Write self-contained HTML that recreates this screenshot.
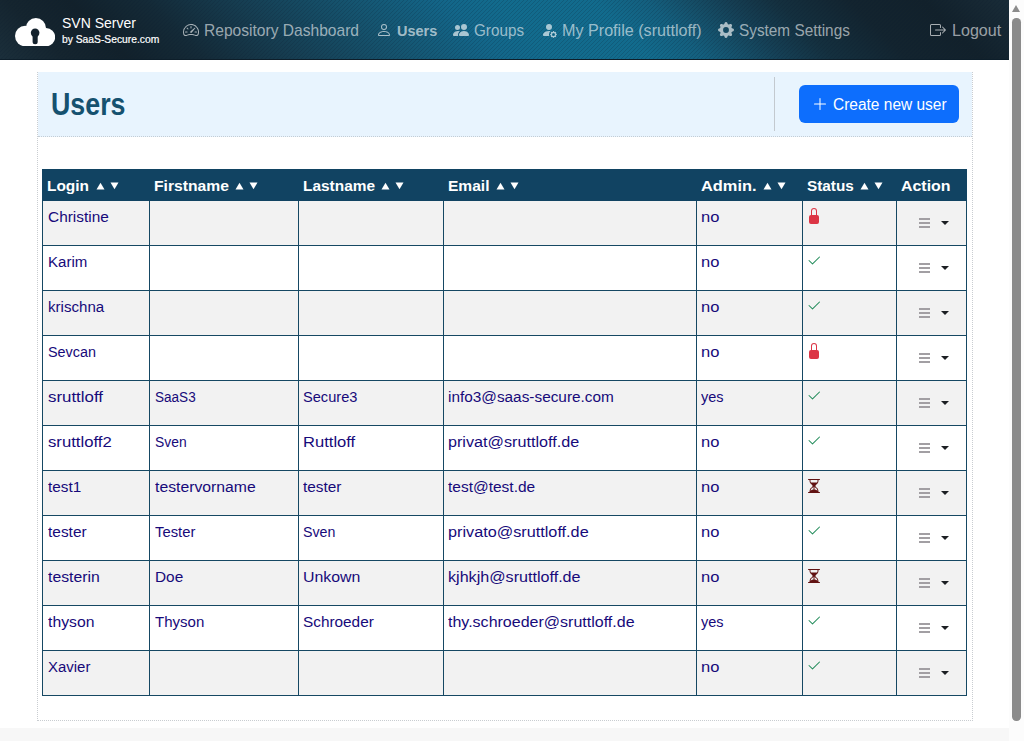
<!DOCTYPE html>
<html lang="en">
<head>
<meta charset="utf-8">
<title>SVN Server - Users</title>
<style>
*{box-sizing:border-box}
html,body{margin:0;padding:0}
body{width:1024px;height:741px;overflow:hidden;position:relative;background:#fff;color:#170a7a;
 font-family:"Liberation Sans",sans-serif;font-size:16px;line-height:24px}
a{text-decoration:none;color:inherit}
ul{list-style:none;margin:0;padding:0}
.sx{display:inline-block;transform-origin:0 50%;white-space:nowrap}
.ic{display:inline-block;vertical-align:top}

/* ---------- navbar ---------- */
.navbar{position:absolute;left:0;top:0;width:1009px;height:60px;border-bottom:1px solid #0d1e2a;overflow:hidden;
 background:linear-gradient(45deg,#1b2f3b 0%,#15252f 6%,#12212b 12%,#142a37 19%,#163e52 28%,#15546f 38%,#136689 47%,#126b8d 52%,#126b8d 61%,#145f7e 66%,#15506a 69.5%,#153f54 73.5%,#14303f 78%,#13242f 85%,#12212b 92%,#192c38 100%);}
.stripes{position:absolute;left:0;top:0;width:1009px;height:59px;display:block}
.brand{position:absolute;left:0;top:0;width:170px;height:60px;color:#fff}
.cloud{position:absolute;left:14.8px;top:17.6px}
.b1{position:absolute;left:62px;top:11px;height:24px;line-height:24px}
.b2{position:absolute;left:62px;top:28.5px;height:18px;line-height:18px}
.f-b1{font-size:15px}
.f-b2{font-size:10.6px;-webkit-text-stroke:.2px #fff}
.nl{position:absolute;top:19px;height:24px;color:rgba(255,255,255,.58);white-space:nowrap}
.nl .ic{position:absolute;left:0;top:3px;color:rgba(255,255,255,.64)}
.nt{position:absolute;top:0;line-height:24px}
.f-nav{font-size:15.7px}
.f-navb{font-size:15.2px;font-weight:bold}
.nl.act{color:rgba(255,255,255,.62)}

/* ---------- page ---------- */
.wrap{position:absolute;left:37px;top:72px;width:936px;height:649px;border:1px dotted #c9cdd1;border-top:0;background:#fff}
.head{position:absolute;left:0;top:0;width:934px;height:65px;background:#e8f4fe;border-bottom:1px dotted #c4cdd5}
h1{position:absolute;left:13px;top:11.5px;margin:0;font-size:30.5px;line-height:40px;font-weight:bold;color:#15516f}
.f-h1{font-size:30.5px}
.vr{position:absolute;left:736px;top:5px;width:1px;height:54px;background:#c3c9cf}
.btn{position:absolute;left:761px;top:13px;width:160px;height:38px;border-radius:6px;background:#0d6efd;color:#fff}
.btn .plus{position:absolute;left:13px;top:11px}
.bt{position:absolute;left:33.5px;top:8px;line-height:24px}
.f-btn{font-size:15.6px}

.body{position:absolute;left:4px;top:97px}
table{border-collapse:separate;border-spacing:0;table-layout:fixed;width:925px}
th,td{padding:4px 5px;vertical-align:top;text-align:left;font-weight:normal;white-space:nowrap;overflow:hidden}
thead th{height:32px;background:#114362;color:#fff;border:0;font-weight:bold;padding:5px 5px 3px 4px}
thead th:first-child{padding-left:5px}
.f-th{font-size:15.5px;font-weight:bold}
.f-td{font-size:15.5px}
tbody td{height:45px;border-right:1px solid #164863;border-bottom:1px solid #164863}
tbody td:first-child{border-left:1px solid #164863}
tbody tr:nth-child(odd) td{background:#f2f2f2}
tbody tr:nth-child(even) td{background:#fff}
.c0{width:108px}.c1{width:149px}.c2{width:145px}.c3{width:253px}.c4{width:106px}.c5{width:94px}.c6{width:70px}
.tri{display:inline-block;vertical-align:top;margin:8px 0 0 6.5px}
.tri.d{margin-left:5px}
tbody td:nth-child(3),tbody td:nth-child(4){padding-left:4px}
tbody td:nth-child(5){padding-left:3.5px}
td.st{padding:7px 0 0 3px}
td.st .ic{display:block}
.st-lock{color:#dc3545}
.st-check{color:#198754}
.st-hour{color:#611212}
td.ac{padding:4px 0 0 5px}
.dd{display:block;margin:0;padding:0;width:60px;height:36px;border:0;background:transparent;position:relative}
.dd .li{position:absolute;left:16.75px;top:13px;display:block}
.caret{position:absolute;left:39px;top:16px;width:0;height:0;border-left:4.1px solid transparent;border-right:4.1px solid transparent;border-top:4px solid #1c1f23}

.foot{position:absolute;left:0;top:728px;width:1009px;height:13px;background:#f7f7f7}

/* ---------- fake scrollbar ---------- */
.sb{position:absolute;left:1009px;top:0;width:15px;height:741px;background:#fcfcfc}
.sb-up{position:absolute;left:3px;top:5px;width:0;height:0;border-left:4.5px solid transparent;border-right:4.5px solid transparent;border-bottom:7px solid #8b8b8b}
.sb-th{position:absolute;left:3.3px;top:18px;width:8.4px;height:702.6px;border-radius:4.2px;background:#8b8b8b}

</style>
</head>
<body>
<nav class="navbar">
<svg class="stripes" width="1009" height="59"><defs><pattern id="dg" width="4" height="4" patternUnits="userSpaceOnUse"><path d="M-1 1l2-2M0 4l4-4M3 5l2-2" stroke="#0b1830" stroke-opacity=".19" stroke-width="1"/></pattern></defs><rect width="1009" height="59" fill="url(#dg)"/></svg>
<a class="brand" href="#"><svg class="cloud" width="40.2" height="28.3" viewBox="0 0 40.2 28.3"><g fill="#fff"><circle cx="20.9" cy="10.1" r="10.1"/><circle cx="10.25" cy="18.05" r="10.25"/><circle cx="31.05" cy="19.15" r="9.15"/><rect x="10.25" y="14" width="20.8" height="14.3"/></g><g fill="#14222d"><circle cx="20.14" cy="14.85" r="4.3"/><rect x="17.6" y="14.85" width="5.1" height="11.4" rx="2.5"/></g></svg><span class="b1"><span class="sx f-b1" style="transform:scaleX(0.934);margin-right:-5.2px">SVN Server</span></span><span class="b2"><span class="sx f-b2" style="transform:scaleX(0.972);margin-right:-2.8px">by SaaS-Secure.com</span></span></a>
<ul class="nav">
<li><a href="#" class="nl" style="left:183px"><svg class="ic" width="16" height="16" viewBox="0 0 16 16" fill="currentColor" ><path d="M8 4a.5.5 0 0 1 .5.5V6a.5.5 0 0 1-1 0V4.5A.5.5 0 0 1 8 4zM3.732 5.732a.5.5 0 0 1 .707 0l.915.914a.5.5 0 1 1-.708.708l-.914-.915a.5.5 0 0 1 0-.707zM2 10a.5.5 0 0 1 .5-.5h1.586a.5.5 0 0 1 0 1H2.5A.5.5 0 0 1 2 10zm9.5 0a.5.5 0 0 1 .5-.5h1.5a.5.5 0 0 1 0 1H12a.5.5 0 0 1-.5-.5zm.754-4.246a.389.389 0 0 0-.527-.02L7.547 9.31a.91.91 0 1 0 1.302 1.258l3.434-4.297a.389.389 0 0 0-.029-.518z"/><path fill-rule="evenodd" d="M0 10a8 8 0 1 1 15.547 2.661c-.442 1.253-1.845 1.602-2.932 1.25C11.309 13.488 9.475 13 8 13c-1.474 0-3.31.488-4.615.911-1.087.352-2.49.003-2.932-1.25A7.988 7.988 0 0 1 0 10zm8-7a7 7 0 0 0-6.603 9.329c.203.575.923.876 1.68.63C4.397 12.533 6.358 12 8 12s3.604.532 4.923.96c.757.245 1.477-.056 1.68-.631A7 7 0 0 0 8 3z"/></svg><span class="nt" style="left:21.3px"><span class="sx f-nav" style="transform:scaleX(0.993);margin-right:-1.1px">Repository Dashboard</span></span></a></li>
<li><a href="#" class="nl act" style="left:376px"><svg class="ic" width="16" height="16" viewBox="0 0 16 16" fill="currentColor" ><path d="M8 8a3 3 0 1 0 0-6 3 3 0 0 0 0 6zm2-3a2 2 0 1 1-4 0 2 2 0 0 1 4 0zm4 8c0 1-1 1-1 1H3s-1 0-1-1 1-4 6-4 6 3 6 4zm-1-.004c-.001-.246-.154-.986-.832-1.664C11.516 10.68 10.289 10 8 10c-2.29 0-3.516.68-4.168 1.332-.678.678-.83 1.418-.832 1.664h10z"/></svg><span class="nt" style="left:21.2px"><span class="sx f-navb" style="transform:scaleX(0.952);margin-right:-2.0px">Users</span></span></a></li>
<li><a href="#" class="nl" style="left:453px"><svg class="ic" width="16" height="16" viewBox="0 0 16 16" fill="currentColor" ><path d="M7 14s-1 0-1-1 1-4 5-4 5 3 5 4-1 1-1 1H7Zm4-6a3 3 0 1 0 0-6 3 3 0 0 0 0 6Zm-5.784 6A2.238 2.238 0 0 1 5 13c0-1.355.68-2.75 1.936-3.72A6.325 6.325 0 0 0 5 9c-4 0-5 3-5 4s1 1 1 1h4.216ZM4.5 8a2.5 2.5 0 1 0 0-5 2.5 2.5 0 0 0 0 5Z"/></svg><span class="nt" style="left:21.2px"><span class="sx f-nav" style="transform:scaleX(0.972);margin-right:-1.5px">Groups</span></span></a></li>
<li><a href="#" class="nl" style="left:541px"><svg class="ic" width="16" height="16" viewBox="0 0 16 16" fill="currentColor" ><path d="M11 5a3 3 0 1 1-6 0 3 3 0 0 1 6 0Zm-9 8c0 1 1 1 1 1h5.256A4.493 4.493 0 0 1 8 12.5a4.49 4.49 0 0 1 1.544-3.393C9.077 9.038 8.564 9 8 9c-5 0-6 3-6 4Zm9.886-3.54c.18-.613 1.048-.613 1.229 0l.043.148a.64.64 0 0 0 .921.382l.136-.074c.561-.306 1.175.308.87.869l-.075.136a.64.64 0 0 0 .382.92l.149.045c.612.18.612 1.048 0 1.229l-.15.043a.64.64 0 0 0-.38.921l.074.136c.305.561-.309 1.175-.87.87l-.136-.075a.64.64 0 0 0-.92.382l-.045.149c-.18.612-1.048.612-1.229 0l-.043-.15a.64.64 0 0 0-.921-.38l-.136.074c-.561.305-1.175-.309-.87-.87l.075-.136a.64.64 0 0 0-.382-.92l-.148-.045c-.613-.18-.613-1.048 0-1.229l.148-.043a.64.64 0 0 0 .382-.921l-.074-.136c-.306-.561.308-1.175.869-.87l.136.075a.64.64 0 0 0 .92-.382l.045-.148ZM14 12.5a1.5 1.5 0 1 0-3 0 1.5 1.5 0 0 0 3 0Z"/></svg><span class="nt" style="left:21.4px"><span class="sx f-nav" style="transform:scaleX(1.029);margin-right:3.9px">My Profile (sruttloff)</span></span></a></li>
<li><a href="#" class="nl" style="left:718px"><svg class="ic" width="16" height="16" viewBox="0 0 16 16" fill="currentColor" ><path d="M9.405 1.05c-.413-1.4-2.397-1.4-2.81 0l-.1.34a1.464 1.464 0 0 1-2.105.872l-.31-.17c-1.283-.698-2.686.705-1.987 1.987l.169.311c.446.82.023 1.841-.872 2.105l-.34.1c-1.4.413-1.4 2.397 0 2.81l.34.1a1.464 1.464 0 0 1 .872 2.105l-.17.31c-.698 1.283.705 2.686 1.987 1.987l.311-.169a1.464 1.464 0 0 1 2.105.872l.1.34c.413 1.4 2.397 1.4 2.81 0l.1-.34a1.464 1.464 0 0 1 2.105-.872l.31.17c1.283.698 2.686-.705 1.987-1.987l-.169-.311a1.464 1.464 0 0 1 .872-2.105l.34-.1c1.4-.413 1.4-2.397 0-2.81l-.34-.1a1.464 1.464 0 0 1-.872-2.105l.17-.31c.698-1.283-.705-2.686-1.987-1.987l-.311.169a1.464 1.464 0 0 1-2.105-.872l-.1-.34zM8 10.93a2.929 2.929 0 1 1 0-5.86 2.929 2.929 0 0 1 0 5.858z"/></svg><span class="nt" style="left:20.8px"><span class="sx f-nav" style="transform:scaleX(0.978);margin-right:-2.5px">System Settings</span></span></a></li>
<li><a href="#" class="nl" style="left:930px"><svg class="ic" width="16" height="16" viewBox="0 0 16 16" fill="currentColor" ><path fill-rule="evenodd" d="M10 12.5a.5.5 0 0 1-.5.5h-8a.5.5 0 0 1-.5-.5v-9a.5.5 0 0 1 .5-.5h8a.5.5 0 0 1 .5.5v2a.5.5 0 0 0 1 0v-2A1.5 1.5 0 0 0 9.500 2h-8A1.5 1.5 0 0 0 0 3.500v9A1.5 1.5 0 0 0 1.500 14h8a1.5 1.5 0 0 0 1.500-1.500v-2a.5.5 0 0 0-1 0v2z"/><path fill-rule="evenodd" d="M15.854 8.354a.5.5 0 0 0 0-.708l-3-3a.5.5 0 0 0-.708.708L14.293 7.500H5.500a.5.5 0 0 0 0 1h8.793l-2.147 2.146a.5.5 0 0 0 .708.708l3-3z"/></svg><span class="nt" style="left:21.6px"><span class="sx f-nav" style="transform:scaleX(1.025);margin-right:1.2px">Logout</span></span></a></li>
</ul>
</nav>
<main class="wrap">
<div class="head">
<h1><span class="sx f-h1" style="transform:scaleX(0.879);margin-right:-10.3px">Users</span></h1>
<div class="vr"></div>
<a class="btn" href="#"><svg class="ic plus" width="16" height="16" viewBox="0 0 16 16" fill="currentColor" ><path fill-rule="evenodd" d="M8 2a.5.5 0 0 1 .5.5v5h5a.5.5 0 0 1 0 1h-5v5a.5.5 0 0 1-1 0v-5h-5a.5.5 0 0 1 0-1h5v-5A.5.5 0 0 1 8 2Z"/></svg><span class="bt"><span class="sx f-btn" style="transform:scaleX(0.993);margin-right:-0.8px">Create new user</span></span></a>
</div>
<div class="body">
<table>
<thead><tr>
<th class="c0"><span class="sx f-th" style="transform:scaleX(0.996);margin-right:-0.2px">Login</span><svg class="tri" width="9" height="8" viewBox="0 0 9 8"><path d="M4.5 0.7 8.5 7.5H0.5z" fill="#fff"/></svg><svg class="tri d" width="9" height="8" viewBox="0 0 9 8"><path d="M0.5 0.5H8.5L4.5 7.3z" fill="#fff"/></svg></th>
<th class="c1"><span class="sx f-th" style="transform:scaleX(1.012);margin-right:0.9px">Firstname</span><svg class="tri" width="9" height="8" viewBox="0 0 9 8"><path d="M4.5 0.7 8.5 7.5H0.5z" fill="#fff"/></svg><svg class="tri d" width="9" height="8" viewBox="0 0 9 8"><path d="M0.5 0.5H8.5L4.5 7.3z" fill="#fff"/></svg></th>
<th class="c2"><span class="sx f-th" style="transform:scaleX(0.995);margin-right:-0.4px">Lastname</span><svg class="tri" width="9" height="8" viewBox="0 0 9 8"><path d="M4.5 0.7 8.5 7.5H0.5z" fill="#fff"/></svg><svg class="tri d" width="9" height="8" viewBox="0 0 9 8"><path d="M0.5 0.5H8.5L4.5 7.3z" fill="#fff"/></svg></th>
<th class="c3"><span class="sx f-th" style="transform:scaleX(1.003);margin-right:0.1px">Email</span><svg class="tri" width="9" height="8" viewBox="0 0 9 8"><path d="M4.5 0.7 8.5 7.5H0.5z" fill="#fff"/></svg><svg class="tri d" width="9" height="8" viewBox="0 0 9 8"><path d="M0.5 0.5H8.5L4.5 7.3z" fill="#fff"/></svg></th>
<th class="c4"><span class="sx f-th" style="transform:scaleX(1.057);margin-right:3.0px">Admin.</span><svg class="tri" width="9" height="8" viewBox="0 0 9 8"><path d="M4.5 0.7 8.5 7.5H0.5z" fill="#fff"/></svg><svg class="tri d" width="9" height="8" viewBox="0 0 9 8"><path d="M0.5 0.5H8.5L4.5 7.3z" fill="#fff"/></svg></th>
<th class="c5"><span class="sx f-th" style="transform:scaleX(0.988);margin-right:-0.6px">Status</span><svg class="tri" width="9" height="8" viewBox="0 0 9 8"><path d="M4.5 0.7 8.5 7.5H0.5z" fill="#fff"/></svg><svg class="tri d" width="9" height="8" viewBox="0 0 9 8"><path d="M0.5 0.5H8.5L4.5 7.3z" fill="#fff"/></svg></th>
<th class="c6"><span class="sx f-th" style="transform:scaleX(1.027);margin-right:1.3px">Action</span></th>
</tr></thead>
<tbody>
<tr><td><span class="sx f-td" style="transform:scaleX(0.994);margin-right:-0.4px">Christine</span></td><td></td><td></td><td></td><td><span class="sx f-td" style="transform:scaleX(1.067);margin-right:1.1px">no</span></td><td class="st"><svg class="ic st-lock" width="16" height="16" viewBox="0 0 16 16" fill="currentColor" ><path d="M8 1a2 2 0 0 1 2 2v4H6V3a2 2 0 0 1 2-2zm3 6V3a3 3 0 0 0-6 0v4a2 2 0 0 0-2 2v5a2 2 0 0 0 2 2h6a2 2 0 0 0 2-2V9a2 2 0 0 0-2-2z"/></svg></td><td class="ac"><button type="button" class="dd"><svg class="li" width="11.25" height="10" viewBox="0 0 11.25 10"><path fill="#a29fa3" d="M0 0h11.25v2H0zM0 4h11.25v2H0zM0 8h11.25v2H0z"/></svg><span class="caret"></span></button></td></tr>
<tr><td><span class="sx f-td" style="transform:scaleX(0.971);margin-right:-1.2px">Karim</span></td><td></td><td></td><td></td><td><span class="sx f-td" style="transform:scaleX(1.067);margin-right:1.1px">no</span></td><td class="st"><svg class="ic st-check" width="16" height="16" viewBox="0 0 16 16" fill="currentColor" ><path d="M13.854 3.646a.5.5 0 0 1 0 .708l-7 7a.5.5 0 0 1-.708 0l-3.500-3.500a.5.5 0 1 1 .708-.708L6.500 10.293l6.646-6.647a.5.5 0 0 1 .708 0z"/></svg></td><td class="ac"><button type="button" class="dd"><svg class="li" width="11.25" height="10" viewBox="0 0 11.25 10"><path fill="#a29fa3" d="M0 0h11.25v2H0zM0 4h11.25v2H0zM0 8h11.25v2H0z"/></svg><span class="caret"></span></button></td></tr>
<tr><td><span class="sx f-td" style="transform:scaleX(0.974);margin-right:-1.5px">krischna</span></td><td></td><td></td><td></td><td><span class="sx f-td" style="transform:scaleX(1.067);margin-right:1.1px">no</span></td><td class="st"><svg class="ic st-check" width="16" height="16" viewBox="0 0 16 16" fill="currentColor" ><path d="M13.854 3.646a.5.5 0 0 1 0 .708l-7 7a.5.5 0 0 1-.708 0l-3.500-3.500a.5.5 0 1 1 .708-.708L6.500 10.293l6.646-6.647a.5.5 0 0 1 .708 0z"/></svg></td><td class="ac"><button type="button" class="dd"><svg class="li" width="11.25" height="10" viewBox="0 0 11.25 10"><path fill="#a29fa3" d="M0 0h11.25v2H0zM0 4h11.25v2H0zM0 8h11.25v2H0z"/></svg><span class="caret"></span></button></td></tr>
<tr><td><span class="sx f-td" style="transform:scaleX(0.928);margin-right:-3.7px">Sevcan</span></td><td></td><td></td><td></td><td><span class="sx f-td" style="transform:scaleX(1.067);margin-right:1.1px">no</span></td><td class="st"><svg class="ic st-lock" width="16" height="16" viewBox="0 0 16 16" fill="currentColor" ><path d="M8 1a2 2 0 0 1 2 2v4H6V3a2 2 0 0 1 2-2zm3 6V3a3 3 0 0 0-6 0v4a2 2 0 0 0-2 2v5a2 2 0 0 0 2 2h6a2 2 0 0 0 2-2V9a2 2 0 0 0-2-2z"/></svg></td><td class="ac"><button type="button" class="dd"><svg class="li" width="11.25" height="10" viewBox="0 0 11.25 10"><path fill="#a29fa3" d="M0 0h11.25v2H0zM0 4h11.25v2H0zM0 8h11.25v2H0z"/></svg><span class="caret"></span></button></td></tr>
<tr><td><span class="sx f-td" style="transform:scaleX(1.088);margin-right:4.5px">sruttloff</span></td><td><span class="sx f-td" style="transform:scaleX(0.874);margin-right:-5.8px">SaaS3</span></td><td><span class="sx f-td" style="transform:scaleX(0.942);margin-right:-3.3px">Secure3</span></td><td><span class="sx f-td" style="transform:scaleX(0.991);margin-right:-1.6px">info3@saas-secure.com</span></td><td><span class="sx f-td" style="transform:scaleX(0.937);margin-right:-1.5px">yes</span></td><td class="st"><svg class="ic st-check" width="16" height="16" viewBox="0 0 16 16" fill="currentColor" ><path d="M13.854 3.646a.5.5 0 0 1 0 .708l-7 7a.5.5 0 0 1-.708 0l-3.500-3.500a.5.5 0 1 1 .708-.708L6.500 10.293l6.646-6.647a.5.5 0 0 1 .708 0z"/></svg></td><td class="ac"><button type="button" class="dd"><svg class="li" width="11.25" height="10" viewBox="0 0 11.25 10"><path fill="#a29fa3" d="M0 0h11.25v2H0zM0 4h11.25v2H0zM0 8h11.25v2H0z"/></svg><span class="caret"></span></button></td></tr>
<tr><td><span class="sx f-td" style="transform:scaleX(1.078);margin-right:4.6px">sruttloff2</span></td><td><span class="sx f-td" style="transform:scaleX(0.894);margin-right:-3.7px">Sven</span></td><td><span class="sx f-td" style="transform:scaleX(1.069);margin-right:3.4px">Ruttloff</span></td><td><span class="sx f-td" style="transform:scaleX(1.043);margin-right:5.5px">privat@sruttloff.de</span></td><td><span class="sx f-td" style="transform:scaleX(1.067);margin-right:1.1px">no</span></td><td class="st"><svg class="ic st-check" width="16" height="16" viewBox="0 0 16 16" fill="currentColor" ><path d="M13.854 3.646a.5.5 0 0 1 0 .708l-7 7a.5.5 0 0 1-.708 0l-3.500-3.500a.5.5 0 1 1 .708-.708L6.500 10.293l6.646-6.647a.5.5 0 0 1 .708 0z"/></svg></td><td class="ac"><button type="button" class="dd"><svg class="li" width="11.25" height="10" viewBox="0 0 11.25 10"><path fill="#a29fa3" d="M0 0h11.25v2H0zM0 4h11.25v2H0zM0 8h11.25v2H0z"/></svg><span class="caret"></span></button></td></tr>
<tr><td><span class="sx f-td" style="transform:scaleX(0.988);margin-right:-0.4px">test1</span></td><td><span class="sx f-td" style="transform:scaleX(1.017);margin-right:1.7px">testervorname</span></td><td><span class="sx f-td" style="transform:scaleX(0.991);margin-right:-0.4px">tester</span></td><td><span class="sx f-td" style="transform:scaleX(0.999);margin-right:-0.0px">test@test.de</span></td><td><span class="sx f-td" style="transform:scaleX(1.067);margin-right:1.1px">no</span></td><td class="st"><svg class="ic st-hour" width="16" height="16" viewBox="0 0 16 16" fill="currentColor" ><path d="M2.500 15a.5.5 0 1 1 0-1h1v-1a4.500 4.500 0 0 1 2.557-4.060c.29-.139.443-.377.443-.59v-.7c0-.213-.154-.451-.443-.59A4.500 4.500 0 0 1 3.500 3V2h-1a.5.5 0 0 1 0-1h11a.5.5 0 0 1 0 1h-1v1a4.500 4.500 0 0 1-2.557 4.060c-.29.139-.443.377-.443.59v.7c0 .213.154.451.443.59A4.500 4.500 0 0 1 12.500 13v1h1a.5.5 0 0 1 0 1h-11zm2-13v1c0 .537.12 1.045.337 1.500h6.326c.216-.455.337-.963.337-1.500V2h-7zm3 6.350c0 .701-.478 1.236-1.011 1.492A3.500 3.500 0 0 0 4.500 13s.866-1.299 3-1.480V8.350zm1 0v3.170c2.134.181 3 1.480 3 1.480a3.500 3.500 0 0 0-1.989-3.158C8.978 9.586 8.500 9.052 8.500 8.351z"/></svg></td><td class="ac"><button type="button" class="dd"><svg class="li" width="11.25" height="10" viewBox="0 0 11.25 10"><path fill="#a29fa3" d="M0 0h11.25v2H0zM0 4h11.25v2H0zM0 8h11.25v2H0z"/></svg><span class="caret"></span></button></td></tr>
<tr><td><span class="sx f-td" style="transform:scaleX(0.996);margin-right:-0.2px">tester</span></td><td><span class="sx f-td" style="transform:scaleX(0.955);margin-right:-1.9px">Tester</span></td><td><span class="sx f-td" style="transform:scaleX(0.917);margin-right:-2.9px">Sven</span></td><td><span class="sx f-td" style="transform:scaleX(1.047);margin-right:6.3px">privato@sruttloff.de</span></td><td><span class="sx f-td" style="transform:scaleX(1.067);margin-right:1.1px">no</span></td><td class="st"><svg class="ic st-check" width="16" height="16" viewBox="0 0 16 16" fill="currentColor" ><path d="M13.854 3.646a.5.5 0 0 1 0 .708l-7 7a.5.5 0 0 1-.708 0l-3.500-3.500a.5.5 0 1 1 .708-.708L6.500 10.293l6.646-6.647a.5.5 0 0 1 .708 0z"/></svg></td><td class="ac"><button type="button" class="dd"><svg class="li" width="11.25" height="10" viewBox="0 0 11.25 10"><path fill="#a29fa3" d="M0 0h11.25v2H0zM0 4h11.25v2H0zM0 8h11.25v2H0z"/></svg><span class="caret"></span></button></td></tr>
<tr><td><span class="sx f-td" style="transform:scaleX(1.017);margin-right:0.9px">testerin</span></td><td><span class="sx f-td" style="transform:scaleX(0.992);margin-right:-0.2px">Doe</span></td><td><span class="sx f-td" style="transform:scaleX(1.025);margin-right:1.4px">Unkown</span></td><td><span class="sx f-td" style="transform:scaleX(1.040);margin-right:5.0px">kjhkjh@sruttloff.de</span></td><td><span class="sx f-td" style="transform:scaleX(1.067);margin-right:1.1px">no</span></td><td class="st"><svg class="ic st-hour" width="16" height="16" viewBox="0 0 16 16" fill="currentColor" ><path d="M2.500 15a.5.5 0 1 1 0-1h1v-1a4.500 4.500 0 0 1 2.557-4.060c.29-.139.443-.377.443-.59v-.7c0-.213-.154-.451-.443-.59A4.500 4.500 0 0 1 3.500 3V2h-1a.5.5 0 0 1 0-1h11a.5.5 0 0 1 0 1h-1v1a4.500 4.500 0 0 1-2.557 4.060c-.29.139-.443.377-.443.59v.7c0 .213.154.451.443.59A4.500 4.500 0 0 1 12.500 13v1h1a.5.5 0 0 1 0 1h-11zm2-13v1c0 .537.12 1.045.337 1.500h6.326c.216-.455.337-.963.337-1.500V2h-7zm3 6.350c0 .701-.478 1.236-1.011 1.492A3.500 3.500 0 0 0 4.500 13s.866-1.299 3-1.480V8.350zm1 0v3.170c2.134.181 3 1.480 3 1.480a3.500 3.500 0 0 0-1.989-3.158C8.978 9.586 8.500 9.052 8.500 8.351z"/></svg></td><td class="ac"><button type="button" class="dd"><svg class="li" width="11.25" height="10" viewBox="0 0 11.25 10"><path fill="#a29fa3" d="M0 0h11.25v2H0zM0 4h11.25v2H0zM0 8h11.25v2H0z"/></svg><span class="caret"></span></button></td></tr>
<tr><td><span class="sx f-td" style="transform:scaleX(1.016);margin-right:0.7px">thyson</span></td><td><span class="sx f-td" style="transform:scaleX(0.970);margin-right:-1.5px">Thyson</span></td><td><span class="sx f-td" style="transform:scaleX(0.990);margin-right:-0.7px">Schroeder</span></td><td><span class="sx f-td" style="transform:scaleX(1.033);margin-right:5.9px">thy.schroeder@sruttloff.de</span></td><td><span class="sx f-td" style="transform:scaleX(0.937);margin-right:-1.5px">yes</span></td><td class="st"><svg class="ic st-check" width="16" height="16" viewBox="0 0 16 16" fill="currentColor" ><path d="M13.854 3.646a.5.5 0 0 1 0 .708l-7 7a.5.5 0 0 1-.708 0l-3.500-3.500a.5.5 0 1 1 .708-.708L6.500 10.293l6.646-6.647a.5.5 0 0 1 .708 0z"/></svg></td><td class="ac"><button type="button" class="dd"><svg class="li" width="11.25" height="10" viewBox="0 0 11.25 10"><path fill="#a29fa3" d="M0 0h11.25v2H0zM0 4h11.25v2H0zM0 8h11.25v2H0z"/></svg><span class="caret"></span></button></td></tr>
<tr><td><span class="sx f-td" style="transform:scaleX(0.965);margin-right:-1.5px">Xavier</span></td><td></td><td></td><td></td><td><span class="sx f-td" style="transform:scaleX(1.067);margin-right:1.1px">no</span></td><td class="st"><svg class="ic st-check" width="16" height="16" viewBox="0 0 16 16" fill="currentColor" ><path d="M13.854 3.646a.5.5 0 0 1 0 .708l-7 7a.5.5 0 0 1-.708 0l-3.500-3.500a.5.5 0 1 1 .708-.708L6.500 10.293l6.646-6.647a.5.5 0 0 1 .708 0z"/></svg></td><td class="ac"><button type="button" class="dd"><svg class="li" width="11.25" height="10" viewBox="0 0 11.25 10"><path fill="#a29fa3" d="M0 0h11.25v2H0zM0 4h11.25v2H0zM0 8h11.25v2H0z"/></svg><span class="caret"></span></button></td></tr>
</tbody>
</table>
</div>
</main>
<footer class="foot"></footer>
<div class="sb"><div class="sb-up"></div><div class="sb-th"></div></div>
</body>
</html>
